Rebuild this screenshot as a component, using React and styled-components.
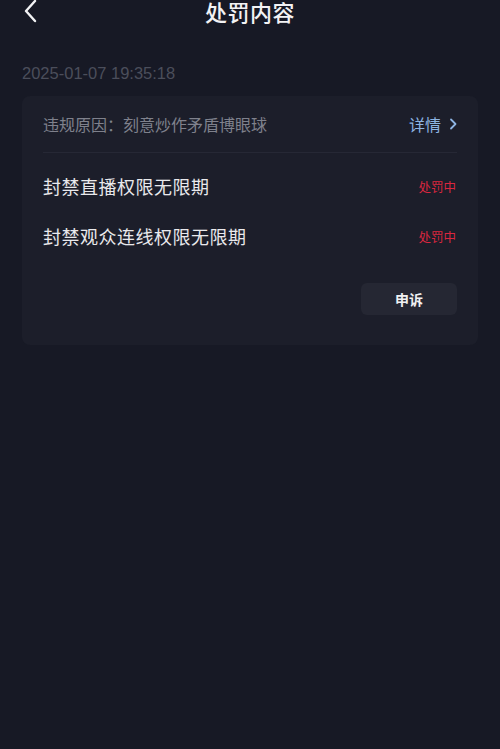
import React from "react";
import styled, { createGlobalStyle } from "styled-components";

const Global = createGlobalStyle`
  html, body { margin: 0; padding: 0; background: #171925; }
  body { font-family: "Noto Sans CJK SC", "Noto Sans", sans-serif; }
  #root { min-height: 749px; }
`;

const Page = styled.div`
  width: 500px;
  height: 749px;
  background: #171925;
  overflow: hidden;
  display: flex;
  flex-direction: column;
`;

const NavBar = styled.div`
  height: 24px;
  display: grid;
  grid-template-columns: 60px 1fr 60px;
  align-items: center;
  margin-top: -1px;
`;

const BackBtn = styled.div`
  display: flex;
  align-items: center;
  padding-left: 24px;
`;

const Title = styled.div`
  text-align: center;
  color: #f2f2f4;
  font-size: 22px;
  font-weight: 500;
  line-height: 24px;
  letter-spacing: 0.5px;
`;

const DateText = styled.div`
  margin: 40px 0 0 22px;
  color: #4b4e5b;
  font-family: "Liberation Sans", "Noto Sans", sans-serif;
  font-size: 16.5px;
  line-height: 20px;
`;

const Card = styled.div`
  margin: 13px 22px 0 22px;
  background: #1c1e2a;
  border-radius: 8px;
  padding: 0 21px 30px 21px;
  display: flex;
  flex-direction: column;
`;

const ReasonRow = styled.div`
  display: flex;
  align-items: center;
  justify-content: space-between;
  height: 56px;
  border-bottom: 1px solid #262835;
`;

const Reason = styled.span`
  color: #7f818c;
  font-size: 16px;
`;

const Detail = styled.span`
  display: flex;
  align-items: center;
  gap: 8px;
  color: #8db4e2;
  font-size: 16px;
`;

const ItemRow = styled.div`
  display: flex;
  align-items: center;
  justify-content: space-between;
  height: 50px;
  margin-top: ${(p) => (p.$first ? "8px" : "0")};
`;

const ItemText = styled.span`
  color: #e9e9ec;
  font-size: 18px;
  letter-spacing: 0.5px;
`;

const Tag = styled.span`
  color: #d9263f;
  font-size: 12.5px;
  padding-right: 1px;
`;

const Actions = styled.div`
  display: flex;
  justify-content: flex-end;
  margin-top: 22px;
`;

const Appeal = styled.div`
  width: 96px;
  height: 32px;
  border-radius: 6px;
  background: #252733;
  color: #f0f0f2;
  font-size: 14px;
  font-weight: 700;
  display: flex;
  align-items: center;
  justify-content: center;
`;

export default function App() {
  return (
    <Page>
      <Global />
      <NavBar>
        <BackBtn>
          <svg width="14" height="24" viewBox="0 0 14 24">
            <path d="M11 2 L2 12 L11 22" fill="none" stroke="#f2f2f4" strokeWidth="2.4" strokeLinecap="round" strokeLinejoin="round" />
          </svg>
        </BackBtn>
        <Title>处罚内容</Title>
        <div />
      </NavBar>
      <DateText>2025-01-07 19:35:18</DateText>
      <Card>
        <ReasonRow>
          <Reason>违规原因：刻意炒作矛盾博眼球</Reason>
          <Detail>
            详情
            <svg width="8" height="12" viewBox="0 0 8 12">
              <path d="M2 1.5 L6.5 6 L2 10.5" fill="none" stroke="#8db4e2" strokeWidth="1.8" strokeLinecap="round" strokeLinejoin="round" />
            </svg>
          </Detail>
        </ReasonRow>
        <ItemRow $first>
          <ItemText>封禁直播权限无限期</ItemText>
          <Tag>处罚中</Tag>
        </ItemRow>
        <ItemRow>
          <ItemText>封禁观众连线权限无限期</ItemText>
          <Tag>处罚中</Tag>
        </ItemRow>
        <Actions>
          <Appeal>申诉</Appeal>
        </Actions>
      </Card>
    </Page>
  );
}
